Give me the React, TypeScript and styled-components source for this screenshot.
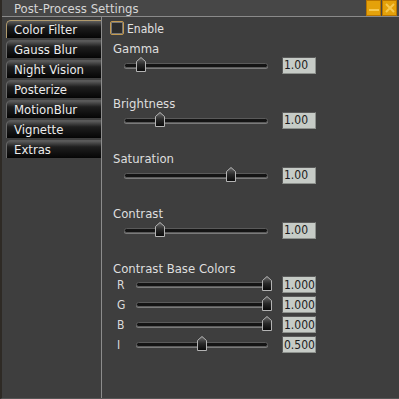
import * as React from 'react';
import styled, { createGlobalStyle } from 'styled-components';

const tabs = ['Color Filter', 'Gauss Blur', 'Night Vision', 'Posterize', 'MotionBlur', 'Vignette', 'Extras'];

const mainSliders = [
  { label: 'Gamma', value: '1.00', pos: 0.115 },
  { label: 'Brightness', value: '1.00', pos: 0.245 },
  { label: 'Saturation', value: '1.00', pos: 0.745 },
  { label: 'Contrast', value: '1.00', pos: 0.245 },
];

const baseColors = [
  { label: 'R', value: '1.000', pos: 1 },
  { label: 'G', value: '1.000', pos: 1 },
  { label: 'B', value: '1.000', pos: 1 },
  { label: 'I', value: '0.500', pos: 0.5 },
];

const Thumb = ({ pos }) => (
  <ThumbWrap style={{ left: `${pos * 100}%` }}>
    <svg width="10" height="15" viewBox="0 0 10 15">
      <defs>
        <linearGradient id="tg" x1="0" y1="0" x2="0" y2="1">
          <stop offset="0" stopColor="#6a6a6a" />
          <stop offset="0.5" stopColor="#2a2a2a" />
          <stop offset="1" stopColor="#080808" />
        </linearGradient>
      </defs>
      <polygon points="0.5,4.5 5,0.5 9.5,4.5 9.5,14.5 0.5,14.5" fill="url(#tg)" stroke="#b4b4b4" strokeWidth="1" />
    </svg>
  </ThumbWrap>
);

const Slider = ({ pos }) => (
  <Track>
    <Thumb pos={pos} />
  </Track>
);

const App = () => (
  <>
    <GlobalStyle />
    <Window>
      <TitleBar>
        <Title>Post-Process Settings</Title>
        <TitleButtons>
          <WinButton>
            <svg width="12" height="12" viewBox="0 0 12 12">
              <rect x="1" y="7" width="10" height="2" fill="#f6c850" />
            </svg>
          </WinButton>
          <WinButton>
            <svg width="12" height="12" viewBox="0 0 12 12">
              <path d="M2 2 L10 10 M10 2 L2 10" stroke="#f6c850" strokeWidth="2" />
            </svg>
          </WinButton>
        </TitleButtons>
      </TitleBar>
      <Body>
        <Sidebar>
          {tabs.map((t, i) => (
            <Tab key={t} $active={i === 0}>{t}</Tab>
          ))}
        </Sidebar>
        <Content>
          <CheckRow>
            <CheckBox />
            <CheckLabel>Enable</CheckLabel>
          </CheckRow>
          {mainSliders.map(s => (
            <Section key={s.label}>
              <Label>{s.label}</Label>
              <SliderRow>
                <Slider pos={s.pos} />
                <ValueBox>{s.value}</ValueBox>
              </SliderRow>
            </Section>
          ))}
          <Section>
            <Label>Contrast Base Colors</Label>
            <SubList>
              {baseColors.map(c => (
                <SubRow key={c.label}>
                  <SubLabel>{c.label}</SubLabel>
                  <Slider pos={c.pos} />
                  <ValueBox>{c.value}</ValueBox>
                </SubRow>
              ))}
            </SubList>
          </Section>
        </Content>
      </Body>
    </Window>
  </>
);

const GlobalStyle = createGlobalStyle`
  html, body {
    margin: 0;
    padding: 0;
    background: #3e3e3e;
  }
  * {
    box-sizing: border-box;
  }
`;

const Window = styled.div`
  width: 399px;
  height: 399px;
  display: flex;
  flex-direction: column;
  background: #3e3e3e;
  border-left: 2px solid #2e2a25;
  border-bottom: 1px solid #555;
  font-family: "DejaVu Sans Condensed", "DejaVu Sans", sans-serif;
  font-stretch: condensed;
  color: #e2e2e2;
  overflow: hidden;
`;

const TitleBar = styled.div`
  height: 17px;
  display: flex;
  align-items: center;
  justify-content: space-between;
  background: #474747;
  border-bottom: 1px solid #8a8a8a;
  padding-left: 12px;
`;

const Title = styled.div`
  font-size: 13px;
  color: #d6d6d6;
`;

const TitleButtons = styled.div`
  display: flex;
  gap: 1px;
  padding-right: 2px;
  align-self: flex-start;
`;

const WinButton = styled.div`
  width: 15px;
  height: 16px;
  display: flex;
  align-items: center;
  justify-content: center;
  background: #e4a10a;
  border: 1px solid #b87400;
`;

const Body = styled.div`
  flex: 1;
  display: flex;
`;

const Sidebar = styled.div`
  width: 100px;
  display: flex;
  flex-direction: column;
  gap: 2px;
  padding: 3px 0 0 4px;
  border-right: 1px solid #8c8c8c;
`;

const Tab = styled.div`
  height: 18px;
  display: flex;
  align-items: center;
  padding-left: 7px;
  font-size: 13px;
  color: #ececec;
  border-radius: 5px 0 0 0;
  background: linear-gradient(#5c5c5c, #1e1e1e 35%, #050505);
  border-left: 1px solid ${p => (p.$active ? '#b09a6c' : '#6a6a6a')};
  border-top: 1px solid ${p => (p.$active ? '#b09a6c' : '#5a5a5a')};
`;

const Content = styled.div`
  flex: 1;
  display: flex;
  flex-direction: column;
  padding: 3px 0 0 8px;
`;

const CheckRow = styled.div`
  display: flex;
  align-items: center;
  gap: 3px;
  height: 15px;
  margin-bottom: 6px;
`;

const CheckBox = styled.div`
  width: 14px;
  height: 14px;
  border: 1px solid #c49a50;
  border-radius: 2px;
  background: #2c2c2c;
  box-shadow: inset 0 0 0 1px #777;
`;

const CheckLabel = styled.div`
  font-size: 12px;
  padding-top: 2px;
`;

const Section = styled.div`
  display: flex;
  flex-direction: column;
  padding-left: 3px;
  margin-bottom: 22px;
`;

const Label = styled.div`
  font-size: 13px;
  line-height: 15px;
  height: 15px;
  color: #dedede;
`;

const SliderRow = styled.div`
  display: grid;
  grid-template-columns: 144px 34px;
  column-gap: 14px;
  align-items: center;
  height: 18px;
  padding-left: 11px;
`;

const SubList = styled.div`
  display: flex;
  flex-direction: column;
  gap: 3px;
`;

const SubRow = styled.div`
  display: grid;
  grid-template-columns: 23px 132px 34px;
  align-items: center;
  height: 17px;
  & > :last-child {
    margin-left: 14px;
  }
`;

const SubLabel = styled.div`
  font-size: 12px;
  padding-left: 4px;
  color: #dcdcdc;
`;

const Track = styled.div`
  position: relative;
  height: 5px;
  border-radius: 3px;
  background: #141414;
  border: 1px solid #5a5a5a;
  box-shadow: 0 1px 0 #7a7a7a;
`;

const ThumbWrap = styled.div`
  position: absolute;
  top: -7px;
  width: 10px;
  height: 15px;
  margin-left: -5px;
  display: flex;
`;

const ValueBox = styled.div`
  width: 34px;
  height: 17px;
  display: flex;
  align-items: center;
  padding-left: 1px;
  font-size: 12px;
  color: #1c1c1c;
  background: #c6cbc6;
  border: 1px solid #8e928e;
  border-top-color: #5a5a5a;
  border-left-color: #5a5a5a;
  overflow: hidden;
`;

export default App;
